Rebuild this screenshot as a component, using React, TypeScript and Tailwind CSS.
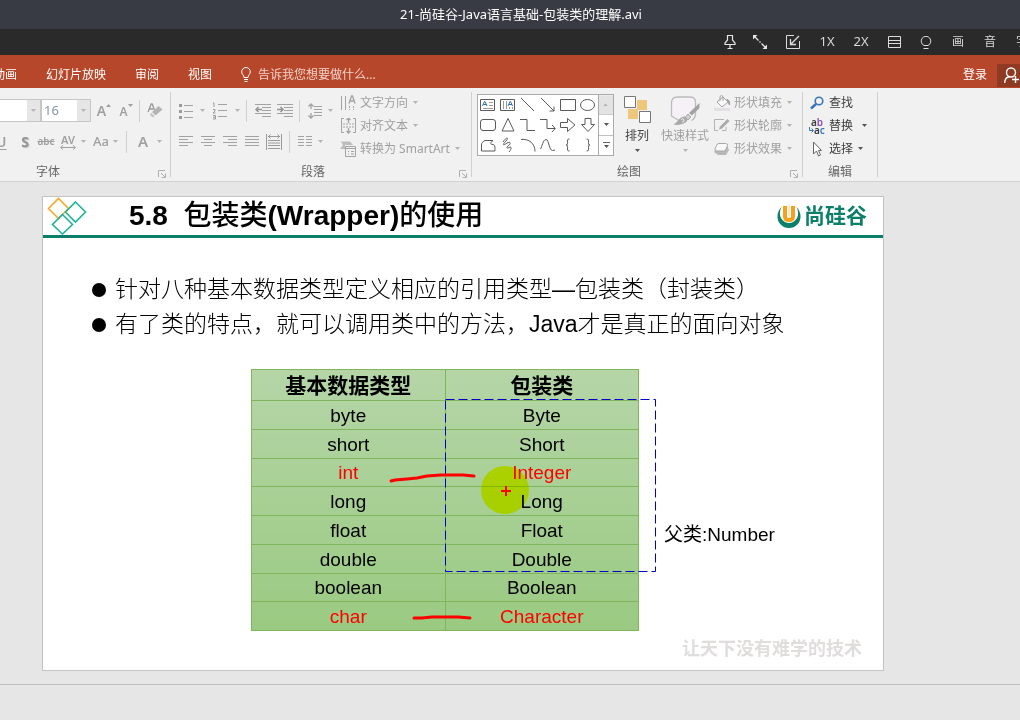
import React from "react";
import type { ReactNode } from "react";

const UI = "font-['Noto_Sans','Noto_Sans_CJK_SC',sans-serif]";

function Caret({ dark = false }: { dark?: boolean }) {
  return (
    <svg width="5" height="3" viewBox="0 0 5 3" className={`shrink-0 ${dark ? "text-[#555555]" : "text-[#b5b5b5]"}`} aria-hidden="true">
      <path d="M0 0h5L2.5 3z" fill="currentColor" />
    </svg>
  );
}

function Tool({ label, className = "", children }: { label: string; className?: string; children: ReactNode }) {
  return (
    <button type="button" aria-label={label} className={`flex h-[23px] shrink-0 items-center justify-center ${className}`}>
      {children}
    </button>
  );
}

function Sep({ className = "" }: { className?: string }) {
  return <span className={`h-[22px] w-px shrink-0 bg-[#d0d0d0] ${className}`} />;
}

function Launcher() {
  return (
    <button type="button" aria-label="更多选项" className="flex w-4 shrink-0 items-center justify-center pt-1">
      <svg width="8" height="8" viewBox="0 0 8 8" fill="none" stroke="#b0b0b0" aria-hidden="true">
        <path d="M.5 7V.5H7M3 3l4 4M7.500 3.500v4h-4" />
      </svg>
    </button>
  );
}

function Lines({ rows, w = 14 }: { rows: [number, number][]; w?: number }) {
  return (
    <svg width={w} height="12" viewBox={`0 0 ${w} 12`} stroke="#a3a3a3" aria-hidden="true">
      {rows.map(([a, b], i) => (
        <path key={i} d={`M${a} ${i * 3 + 0.5}H${b}`} />
      ))}
    </svg>
  );
}

function TextTool({ icon, label, dark = false, caret = true, caretGap = "ml-[5px]" }: { icon: ReactNode; label: string; dark?: boolean; caret?: boolean; caretGap?: string }) {
  return (
    <button type="button" className={`flex h-[23px] items-center whitespace-nowrap ${dark ? "text-[#3c3c3c]" : "text-[#a0a0a0]"}`}>
      <span className="flex w-5 shrink-0 items-center">{icon}</span>
      <span>{label}</span>
      {caret && (
        <span className={`flex ${caretGap}`}>
          <Caret dark={dark} />
        </span>
      )}
    </button>
  );
}

function Group({ title, children, className = "", titleClass = "", launcher = true }: { title: string; children: ReactNode; className?: string; titleClass?: string; launcher?: boolean }) {
  return (
    <section aria-label={title} className={`mt-1 mb-1 flex shrink-0 flex-col justify-between border-r border-[#d0d0d0] ${className}`}>
      {children}
      <div className="flex h-[10px] items-center">
        <span className={`flex-1 text-center text-[#666666] ${titleClass}`}>{title}</span>
        {launcher && <Launcher />}
      </div>
    </section>
  );
}

function FontGroup() {
  return (
    <Group title="字体" className="w-[171px]" titleClass="pr-[58px]">
      <div className="flex flex-col gap-2 pt-[7px] text-[#a0a0a0]">
        <div className="flex items-center">
          <div className="flex h-[23px] w-[41px] border-y border-r border-[#c6c6c6] bg-white">
            <input aria-label="字体名称" className="w-[27px] min-w-0 bg-white" />
            <Tool label="选择字体" className="h-full flex-1 bg-[#e6e6e6]">
              <Caret />
            </Tool>
          </div>
          <div className="flex h-[23px] w-[50px] border border-[#c6c6c6] bg-white">
            <input aria-label="字号" defaultValue="16" className="w-[35px] min-w-0 bg-white pl-[2px] text-[13px] text-[#8795a5]" />
            <Tool label="选择字号" className="h-full flex-1 bg-[#e6e6e6]">
              <Caret />
            </Tool>
          </div>
          <Tool label="增大字号" className="w-[26px] text-[14px] font-semibold">
            <span>A</span>
            <svg width="5" height="14" viewBox="0 0 5 14" aria-hidden="true"><path d="M0 3h5L2.500 0z" fill="#a0a0a0" /></svg>
          </Tool>
          <Tool label="减小字号" className="w-[18px] text-[12px] font-semibold">
            <span className="pt-[2px]">A</span>
            <svg width="5" height="14" viewBox="0 0 5 14" aria-hidden="true"><path d="M0 0h5L2.500 3z" fill="#a0a0a0" /></svg>
          </Tool>
          <Sep className="ml-1" />
          <Tool label="清除格式" className="w-[30px]">
            <svg width="16" height="16" viewBox="0 0 16 16" aria-hidden="true">
              <path d="M1 9 4.200 1h1l2.300 6M2.200 6h4" fill="none" stroke="#999" strokeWidth="1.300" />
              <path d="m11.500 3 4 3.500-7 6L5 9z" fill="#b4b4b4" />
              <path d="m4.200 9.800 3.400 3.400L6 14.500 3 12z" fill="#c4c4c4" />
            </svg>
          </Tool>
        </div>
        <div className="flex items-center">
          <Tool label="下划线" className="w-4 justify-start text-[14px] font-semibold">
            <span className="-ml-1 underline underline-offset-2">U</span>
          </Tool>
          <Tool label="文字阴影" className="w-[18px] text-[14px] font-bold text-[#969696] [text-shadow:1px_1px_1px_#bbbbbb]">S</Tool>
          <Tool label="删除线" className="w-6 text-[10px] font-semibold line-through">abc</Tool>
          <Tool label="字符间距" className="w-5 flex-col">
            <span className="text-[11px] leading-[11px] font-semibold">AV</span>
            <svg width="16" height="5" viewBox="0 0 16 5" fill="none" stroke="#a0a0a0" aria-hidden="true"><path d="M.7 2.500h14.600M3 .3.700 2.500 3 4.700M13 .3l2.300 2.200L13 4.700" /></svg>
          </Tool>
          <Tool label="字符间距选项" className="w-[10px]"><Caret /></Tool>
          <Tool label="更改大小写" className="ml-1 w-[18px] text-[13px] font-medium">Aa</Tool>
          <Tool label="大小写选项" className="w-[10px]"><Caret /></Tool>
          <Sep className="ml-[6px]" />
          <Tool label="字体颜色" className="ml-2 w-4 text-[15px] font-semibold">A</Tool>
          <Tool label="颜色选项" className="w-4"><Caret /></Tool>
        </div>
      </div>
    </Group>
  );
}

function ParagraphGroup() {
  const arrowLines = "M0 .5h16M7 3.500h9M7 6.500h9M0 9.500h16M7 12.500h9";
  return (
    <Group title="段落" className="w-[301px]">
      <div className="flex">
        <div className="flex w-[169px] shrink-0 flex-col gap-2 pt-[7px]">
          <div className="flex items-center pl-2">
            <Tool label="项目符号" className="w-[14px]">
              <svg width="14" height="16" viewBox="0 0 14 16" aria-hidden="true">
                <path d="M0 1h3v3H0zM0 7h3v3H0zM0 13h3v3H0z" fill="#9a9a9a" />
                <path d="M5 2.500h9M5 8.500h9M5 14.500h9" stroke="#a3a3a3" />
              </svg>
            </Tool>
            <Tool label="项目符号选项" className="w-[19px]"><Caret /></Tool>
            <Tool label="编号" className="w-4">
              <svg width="16" height="18" viewBox="0 0 16 18" fill="none" stroke="#9a9a9a" aria-hidden="true">
                <path d="M1 1h1v4M1 7.500h2v1.500L1 11h2.500M1 13.500h2.500v3.500H1M1 15.200h2" />
                <path d="M6 2.500h9M6 8.500h9M6 14.500h9" stroke="#a3a3a3" />
              </svg>
            </Tool>
            <Tool label="编号选项" className="w-[18px]"><Caret /></Tool>
            <Sep />
            <Tool label="减少缩进" className="ml-[7px] w-[17px]">
              <svg width="16" height="13" viewBox="0 0 16 13" fill="none" stroke="#a3a3a3" aria-hidden="true">
                <path d={arrowLines} /><path d="M1 5.500h6M3.500 3 1 5.500 3.500 8" strokeWidth="1.500" stroke="#949494" />
              </svg>
            </Tool>
            <Tool label="增加缩进" className="ml-[5px] w-[17px]">
              <svg width="16" height="13" viewBox="0 0 16 13" fill="none" stroke="#a3a3a3" aria-hidden="true">
                <path d={arrowLines} /><path d="M0 5.500h6M3.500 3 6 5.500 3.500 8" strokeWidth="1.500" stroke="#949494" />
              </svg>
            </Tool>
            <Sep className="ml-[6px]" />
            <Tool label="行距" className="ml-2 w-[14px]">
              <svg width="14" height="16" viewBox="0 0 14 16" fill="none" stroke="#a3a3a3" aria-hidden="true">
                <path d="M3 1v5M3 10v5M.5 3.500 3 1l2.500 2.500M.5 12.500 3 15l2.500-2.500" strokeWidth="1.300" />
                <path d="M6 3.500h8M6 6.500h8M6 9.500h8M6 12.500h8" />
              </svg>
            </Tool>
            <Tool label="行距选项" className="w-4"><Caret /></Tool>
          </div>
          <div className="flex items-center pl-2">
            <Tool label="左对齐" className="w-[14px]"><Lines rows={[[0, 14], [0, 9], [0, 14], [0, 9]]} /></Tool>
            <Tool label="居中" className="ml-2 w-[14px]"><Lines rows={[[0, 14], [3, 11], [0, 14], [3, 11]]} /></Tool>
            <Tool label="右对齐" className="ml-2 w-[14px]"><Lines rows={[[0, 14], [5, 14], [0, 14], [5, 14]]} /></Tool>
            <Tool label="两端对齐" className="ml-2 w-[14px]"><Lines rows={[[0, 14], [0, 14], [0, 14], [0, 14]]} /></Tool>
            <Tool label="分散对齐" className="ml-[7px] w-4">
              <svg width="16" height="16" viewBox="0 0 16 16" fill="none" stroke="#9a9a9a" aria-hidden="true">
                <path d="M.5 0v16M15.500 0v16M2 2.500h12M4.500.5l-2 2 2 2M11.500.5l2 2-2 2M2 6.500h12M2 9h12M2 11.500h12M2 14.500h12" />
              </svg>
            </Tool>
            <Sep className="ml-[7px]" />
            <Tool label="分栏" className="ml-2 w-[14px]">
              <svg width="14" height="12" viewBox="0 0 14 12" stroke="#a3a3a3" aria-hidden="true">
                <path d="M0 .5h6M8 .5h6M0 3.500h6M8 3.500h6M0 6.500h6M8 6.500h6M0 9.500h6M8 9.500h6" />
              </svg>
            </Tool>
            <Tool label="分栏选项" className="w-4"><Caret /></Tool>
          </div>
        </div>
        <div className="-mt-px flex flex-col items-start">
          <TextTool
            label="文字方向"
            icon={
              <svg width="17" height="16" viewBox="0 0 17 16" fill="none" stroke="#a3a3a3" aria-hidden="true">
                <path d="M1.500 1v14M5.500 1v14" /><path d="M9 8.500 11.500 1h1L15 8.500M10 6h4" strokeWidth="1.300" /><path d="M9.500 11v4M13.500 11v4" strokeDasharray="2 1" />
              </svg>
            }
          />
          <TextTool
            label="对齐文本"
            icon={
              <svg width="17" height="16" viewBox="0 0 17 16" fill="none" stroke="#a3a3a3" aria-hidden="true">
                <path d="M4 .5H1.500v14H4M13 .5h2.500v14H13M3 6h2m1 0h2m1 0h2m1 0h2M3 9h2m1 0h2m1 0h2m1 0h2" /><path d="M8.500 0v5M6.500 2l2-2 2 2M8.500 10v5M6.500 13l2 2 2-2" strokeWidth="1.300" />
              </svg>
            }
          />
          <TextTool
            label="转换为 SmartArt"
            icon={
              <svg width="17" height="16" viewBox="0 0 17 16" fill="none" stroke="#a3a3a3" aria-hidden="true">
                <path d="M1 .5h9l3 3.500H5v4H0l3-4z" fill="#bdbdbd" stroke="none" /><path d="M5.500 5.500h10v10h-10zM5.500 7.500h10" /><path d="M8 10.500h1m2 0h3M8 13h1m2 0h3" />
              </svg>
            }
          />
        </div>
      </div>
    </Group>
  );
}

const SHAPES: [string, ReactNode][] = [
  ["文本框", <><path d="M.5 2.500h14v11H.5z" /><path d="M9 5.500h4M9 8.500h4M3 11.500h10" stroke="#9a9a9a" /><path d="M2.500 9 4.500 4.500h.5l2 4.500M3.500 7.500H6" stroke="#2e6cb0" /></>],
  ["竖排文本框", <><path d="M.5 2.500h14v11H.5z" /><path d="M3.500 4v8M6.500 4v8M12.500 10v2M9.500 10v2" stroke="#9a9a9a" /><path d="M8 9 10 4.500h.5l2 4.500M9 7.500h3" stroke="#2e6cb0" /></>],
  ["直线", <path d="m1 1 13 13" />],
  ["箭头", <path d="m1 1 13 13M14 9.500V14H9.500" />],
  ["矩形", <path d="M.5 2.500h15v11H.5z" />],
  ["椭圆", <ellipse cx="7.500" cy="8" rx="7" ry="5.500" />],
  ["圆角矩形", <rect x=".5" y="2.500" width="15" height="11" rx="2.500" />],
  ["三角形", <path d="M8 1.500 14 14H2z" />],
  ["肘形连接符", <path d="M0 2.500h7v11h8" />],
  ["肘形箭头连接符", <path d="M0 2.500h7v9h8M12 8l3.300 3.500L12 15" />],
  ["右箭头", <path d="M.5 5.500h7V1.500L15 8l-7.500 6.500v-4h-7z" />],
  ["下箭头", <path d="M5 1.500h6v6h3.500L8 14.500 1.500 7.500H5z" />],
  ["任意多边形", <path d="M5 3.500h8c-3 2-3 4 0 4 2 0 2 2 2 6.500H1.500V8C1.500 6 2 5 5 3.500z" />],
  ["自由曲线", <path d="M3 5c4-6 6-4 3-1-4 4-3 5 1 2 4-2 4 1 1 3-2 2-1 3 2 1 2 0 1 3-1 5" />],
  ["弧形", <path d="M1 2.500c8-1 14 4 14 12" />],
  ["曲线", <path d="M.5 12C2 10 3 2.500 6 2.500S9 13.500 12.500 13.500L15 13" />],
  ["左大括号", <path d="M9.500 2C7 2 7.500 3 7.500 5.500S7 8 6 8c1 0 1.500 0 1.500 2.500S7 14 9.500 14" />],
  ["右大括号", <path d="M6.500 2C9 2 8.500 3 8.500 5.500S9 8 10 8c-1 0-1.500 0-1.500 2.500S9 14 6.500 14" />],
];

function DrawGroup() {
  return (
    <Group title="绘图" className="w-[331px]">
      <div className="flex">
        <div className="mt-[2px] ml-[5px] flex h-[62px] border border-[#ababab] bg-white">
          <div className="grid grid-cols-6">
            {SHAPES.map(([name, art]) => (
              <button key={name} type="button" aria-label={name} className="flex h-5 w-5 items-center justify-center">
                <svg width="16" height="16" viewBox="0 0 16 16" fill="none" stroke="#5a5a5a" aria-hidden="true">{art}</svg>
              </button>
            ))}
          </div>
          <div className="flex w-[15px] flex-col border-l border-[#ababab]">
            <button type="button" aria-label="上一行" className="flex flex-1 rotate-180 items-center justify-center bg-[#e3e3e3]"><Caret /></button>
            <button type="button" aria-label="下一行" className="flex flex-1 items-center justify-center border-y border-[#c0c0c0]"><Caret dark /></button>
            <button type="button" aria-label="其他形状" className="flex flex-1 flex-col items-center justify-center gap-[2px]">
              <span className="h-px w-[7px] bg-[#666666]" />
              <Caret dark />
            </button>
          </div>
        </div>
        <button type="button" className="ml-[7px] flex w-8 flex-col items-center pt-1 text-[#444444]">
          <svg width="27" height="27" viewBox="0 0 27 27" aria-hidden="true">
            <path d="M13 4h10v10H13zM4 13h10v10H4z" fill="#efc77b" />
            <path d="M.5.500h11v11H.5zM15.500 15.500h11v11h-11z" fill="#fff" stroke="#777" />
          </svg>
          <span className="mt-1 leading-[18px]">排列</span>
          <span className="mt-1"><Caret dark /></span>
        </button>
        <button type="button" className="ml-1 flex w-14 flex-col items-center pt-1 text-[#a0a0a0]">
          <svg width="30" height="30" viewBox="0 0 30 30" aria-hidden="true" className="-mb-[3px]">
            <path d="M12 24.500H9L1.500 20V7q0-6 6-6h12q6 0 6 5v13q-1 4-4 5.500" fill="#f6f1f6" stroke="#bcbcbc" strokeWidth="1.300" strokeLinejoin="round" />
            <path d="M29.500 7v5L22 19.500 19 17z" fill="#a3a3a3" />
            <path d="m18 18 3 3-3 3-3-2.500z" fill="#cfcfcf" stroke="#a9a9a9" />
            <path d="M14.500 20.500c3 1 4 4 1 6s-8 3-12 2c5-2 4-7 11-8z" fill="#a9a9a9" />
            <path d="M11 23.500q2-1.500 3 0t-2 3" fill="none" stroke="#eeeeee" />
          </svg>
          <span className="mt-1 leading-[18px] whitespace-nowrap">快速样式</span>
          <span className="mt-1"><Caret /></span>
        </button>
        <div className="-mt-px ml-px flex flex-col items-start">
          <TextTool
            label="形状填充"
            icon={
              <svg width="17" height="16" viewBox="0 0 17 16" fill="none" stroke="#a3a3a3" aria-hidden="true">
                <path d="m3 7 6-5 5 5-6 5z" fill="#f8f8f8" /><path d="M6 6V1.500q1.500-2 3 0V6" /><path d="M13 4q4 2 2.500 6Q14 8 13 4z" fill="#999" /><path d="M0 13h16v3H0z" fill="#e4dfe4" stroke="none" />
              </svg>
            }
          />
          <TextTool
            label="形状轮廓"
            icon={
              <svg width="17" height="16" viewBox="0 0 17 16" fill="none" stroke="#b3b3b3" aria-hidden="true">
                <path d="M10 1.500H.5v11h3.500M12 9v3.500H8" /><path d="m13.500 1 2 2-7.500 7.500-3 1 1-3z" fill="#a9a9a9" stroke="none" />
              </svg>
            }
          />
          <TextTool
            label="形状效果"
            icon={
              <svg width="17" height="16" viewBox="0 0 17 16" aria-hidden="true">
                <path d="M4 4h9l2 5-3 5H4l-4-3z" fill="#b8b8b8" /><path d="M5 2.500h6.500q2.500 0 2 2l-1.500 3.500q-.5 2-2.500 2H3q-2.500 0-2-2l1.500-3.500q.5-2 2.500-2z" fill="#f8f8f8" stroke="#a8a8a8" />
              </svg>
            }
          />
        </div>
      </div>
    </Group>
  );
}

function EditGroup() {
  return (
    <Group title="编辑" className="w-[75px]" launcher={false}>
      <div className="-mt-px flex flex-col items-start pl-[6px]">
        <TextTool
          dark
          caret={false}
          label="查找"
          icon={<svg width="16" height="14" viewBox="0 0 16 14" fill="none" stroke="#3a76b5" aria-hidden="true"><circle cx="10" cy="5" r="3.800" strokeWidth="1.600" /><path d="m7 8-5 4.500" strokeWidth="2.600" /></svg>}
        />
        <TextTool
          dark
          caretGap="ml-[9px]"
          label="替换"
          icon={
            <span className="flex flex-col text-[10px] leading-[8px] font-semibold">
              <span>a<span className="text-[#8a4fb0]">b</span></span>
              <span className="flex items-center">
                <svg width="5" height="6" viewBox="0 0 5 6" fill="none" stroke="#3a76b5" aria-hidden="true"><path d="M.5 0v3.500H4M2.500 1.500l2 2-2 2" /></svg>
                a<span className="text-[#3a76b5]">c</span>
              </span>
            </span>
          }
        />
        <TextTool
          dark
          label="选择"
          icon={<svg width="16" height="16" viewBox="0 0 16 16" aria-hidden="true"><path d="M4.500 1v12l3-3 2 5 2-1-2-4.500H12.500z" fill="#fff" stroke="#666" /></svg>}
        />
      </div>
    </Group>
  );
}

function PlayerBar() {
  const cls = "flex h-full w-8 shrink-0 items-center justify-center";
  return (
    <div className="h-[26px] overflow-hidden bg-[#2a2a2a] text-[12px] text-[#d8d8d8]">
      <div className="-mr-[18px] flex h-full items-center justify-end">
        <button type="button" aria-label="置顶" className="flex h-full w-7 items-center justify-center">
          <svg width="12" height="14" viewBox="0 0 12 14" fill="none" stroke="#e6e6e6" aria-hidden="true"><path d="M3.500.5h5V5L11 8v1.500H1V8l2.500-3zM6 9.500v4M3.500 13.500h5" strokeWidth="1.200" /></svg>
        </button>
        <button type="button" aria-label="全屏" className={cls}>
          <svg width="14" height="14" viewBox="0 0 14 14" fill="none" stroke="#e6e6e6" strokeWidth="1.300" aria-hidden="true"><path d="M0 0h4.500L0 4.500zM14 14H9.500L14 9.500z" fill="#e6e6e6" stroke="none" /><path d="m1 1 4.500 4.500M6.500 6.500l1 1M8.500 8.500 13 13" /></svg>
        </button>
        <button type="button" aria-label="小窗" className="flex h-full w-[34px] items-center justify-center">
          <svg width="14" height="14" viewBox="0 0 14 14" fill="none" stroke="#dcdcdc" aria-hidden="true"><path d="M8 .5H.5v13h13V6" /><path d="M13 1 5 9M4.500 4v5.500H10" strokeWidth="1.300" /></svg>
        </button>
        <button type="button" className="h-full w-[34px] text-[13px]">1X</button>
        <button type="button" className="h-full w-[34px] text-[13px]">2X</button>
        <button type="button" aria-label="列表" className={cls}>
          <svg width="13" height="12" viewBox="0 0 13 12" fill="none" stroke="#dcdcdc" aria-hidden="true"><path d="M.5.500h12v11H.5zM.5 4.500h12M.5 7.500h12" /></svg>
        </button>
        <button type="button" aria-label="关灯" className={cls}>
          <svg width="12" height="13" viewBox="0 0 12 13" fill="none" stroke="#dcdcdc" aria-hidden="true"><path d="M4 9.500a4.800 4.800 0 1 1 4 0zM3.500 12.500h5" /></svg>
        </button>
        <button type="button" className={cls}>画</button>
        <button type="button" className={cls}>音</button>
        <button type="button" className={cls}>字</button>
      </div>
    </div>
  );
}

function TabBar() {
  return (
    <div className="flex h-[33px] items-center overflow-hidden bg-[#b7472a] pt-[6px] text-[12px] whitespace-nowrap text-white">
      <nav className="-ml-[7px] flex gap-[29px]">
        {["动画", "幻灯片放映", "审阅", "视图"].map((t) => (
          <a key={t} href="#" className="shrink-0">{t}</a>
        ))}
      </nav>
      <button type="button" className="ml-[29px] flex items-center gap-[7px] text-[#f3d3c9]">
        <svg width="10" height="15" viewBox="0 0 10 15" fill="none" stroke="#fff" aria-hidden="true"><path d="M3 10.500C3 8 .7 7.500.700 4.800a4.300 4.300 0 0 1 8.600 0C9.300 7.500 7 8 7 10.500zM3 12.500h4M3.500 14.500h3" /></svg>
        告诉我您想要做什么...
      </button>
      <a href="#" className="ml-auto">登录</a>
      <button type="button" aria-label="共享" className="ml-[10px] mb-px flex h-[23px] w-[23px] items-center justify-end self-end bg-[#8f3b24]">
        <svg width="16" height="17" viewBox="0 0 16 17" fill="none" stroke="#fff" strokeWidth="1.400" aria-hidden="true"><circle cx="7" cy="5.500" r="4.500" /><path d="M.7 16c0-4 2-6 5-6.500M8 12.500h7M11.500 9v7" /></svg>
      </button>
    </div>
  );
}

const ROWS: [string, string, boolean][] = [
  ["byte", "Byte", false],
  ["short", "Short", false],
  ["int", "Integer", true],
  ["long", "Long", false],
  ["float", "Float", false],
  ["double", "Double", false],
  ["boolean", "Boolean", false],
  ["char", "Character", true],
];

function TypeTable() {
  return (
    <div className="relative mt-[27px] ml-[208px] w-[388px]">
      <table className="h-[262px] w-full table-fixed border-collapse border border-[#70ad47] bg-linear-to-b from-[#b5d5a7] to-[#9aca82] text-center text-[19px] leading-6">
        <thead>
          <tr className="h-[31px]">
            <th className="border border-[#7fb65c] p-0 pt-[2px] text-[21px] font-bold">基本数据类型</th>
            <th className="border border-[#7fb65c] p-0 pt-[2px] text-[21px] font-bold">包装类</th>
          </tr>
        </thead>
        <tbody>
          {ROWS.map(([a, b, hot]) => (
            <tr key={a} className={hot ? "text-[#ff0000]" : "text-black"}>
              <td className="border border-[#7fb65c] p-0 pt-[2px]">{a}</td>
              <td className="border border-[#7fb65c] p-0 pt-[2px]">{b}</td>
            </tr>
          ))}
        </tbody>
      </table>
      <svg width="48" height="48" viewBox="0 0 48 48" className="absolute top-[97px] left-[230px] mix-blend-multiply" aria-hidden="true">
        <circle cx="24" cy="24" r="24" fill="#ffff00" />
      </svg>
      <svg width="410" height="262" viewBox="0 0 410 262" fill="none" className="absolute top-0 left-0" aria-hidden="true">
        <path d="M194.500 30.500h210v172h-210z" stroke="#0000c8" strokeDasharray="9 4" />
        <g stroke="#ff0000" strokeWidth="3" strokeLinecap="round" strokeLinejoin="round">
          <path d="m140 112 4-1 12-1 10-1 10-2 14-1h22l11 1" />
          <path d="m163 249 8 0 10-1h26l12 1" />
        </g>
        <path d="M250 122h10M255 117v10" stroke="#ff0000" strokeWidth="2" />
      </svg>
      <p className="absolute top-[153px] left-[413px] text-[19px] leading-[26px] whitespace-nowrap">父类:Number</p>
    </div>
  );
}

function Slide() {
  return (
    <main className="mr-[136px] ml-[42px] border border-[#c3c3c3] bg-white font-['Liberation_Sans','Noto_Sans_CJK_SC',sans-serif] text-black">
      <header className="flex h-[41px] items-center border-b-[3px] border-[#0b7f69]">
        <svg width="40" height="38" viewBox="0 0 40 38" fill="none" strokeWidth="1.600" className="ml-1 shrink-0" aria-hidden="true">
          <path d="m11.500 21.500-10-10L11.500 1.500l10 10z" stroke="#f9a72b" />
          <path d="m28.500 5 10 10L28.500 25 18.500 15zM15.500 17.500l10 10-10 9.500-10-9.500z" stroke="#1eb59b" />
        </svg>
        <h1 className="ml-[42px] flex-1 text-[28px] leading-[40px] font-bold whitespace-pre">
          5.8{"  "}<span className="font-medium">包装类</span>(Wrapper)<span className="font-medium">的使用</span>
        </h1>
        <div className="mr-4 flex items-center gap-[3px] text-[21px] leading-[38px] font-bold text-[#0b7f69]">
          <svg width="24" height="24" viewBox="0 0 24 24" aria-hidden="true">
            <path d="M4.500 3C-4 12 2 24 12 24S28 12 19.500 3q3 6 .5 11-3 5-8 5t-8-5Q1.500 9 4.500 3z" fill="#0b7f69" />
            <path d="M8 2v10.500q0 3.500 4 3.500t4-3.500V2" fill="none" stroke="#f7a01c" strokeWidth="4" />
            <path d="M12 1v11" stroke="#fbd38f" />
          </svg>
          尚硅谷
        </div>
      </header>
      <ul className="pt-[34px] pl-[49px] text-[23px] leading-[35px] font-light">
        {["针对八种基本数据类型定义相应的引用类型—包装类（封装类）", "有了类的特点，就可以调用类中的方法，Java才是真正的面向对象"].map((t) => (
          <li key={t} className="flex items-center gap-[9px] whitespace-nowrap">
            <span className="h-[14px] w-[14px] shrink-0 rounded-full bg-black" />
            {t}
          </li>
        ))}
      </ul>
      <TypeTable />
      <footer className="mt-1 mr-[21px] mb-[7px] text-right text-[18px] leading-7 font-bold text-[#e0dddd]">让天下没有难学的技术</footer>
    </main>
  );
}

export default function App() {
  return (
    <div className={`flex min-h-screen flex-col overflow-hidden bg-[#e6e6e6] ${UI}`}>
      <h2 className="h-[29px] bg-[#383b43] pl-[22px] text-center text-[13px] leading-[29px] text-white">21-尚硅谷-Java语言基础-包装类的理解.avi</h2>
      <PlayerBar />
      <TabBar />
      <div className="flex h-[94px] overflow-hidden border-b border-[#d2d2d2] bg-[#f1f1f1] text-[12px]">
        <FontGroup />
        <ParagraphGroup />
        <DrawGroup />
        <EditGroup />
      </div>
      <div className="flex-1 pt-[14px]">
        <Slide />
        <div className="mt-[13px] border-t border-[#bdbdbd]" />
      </div>
    </div>
  );
}
